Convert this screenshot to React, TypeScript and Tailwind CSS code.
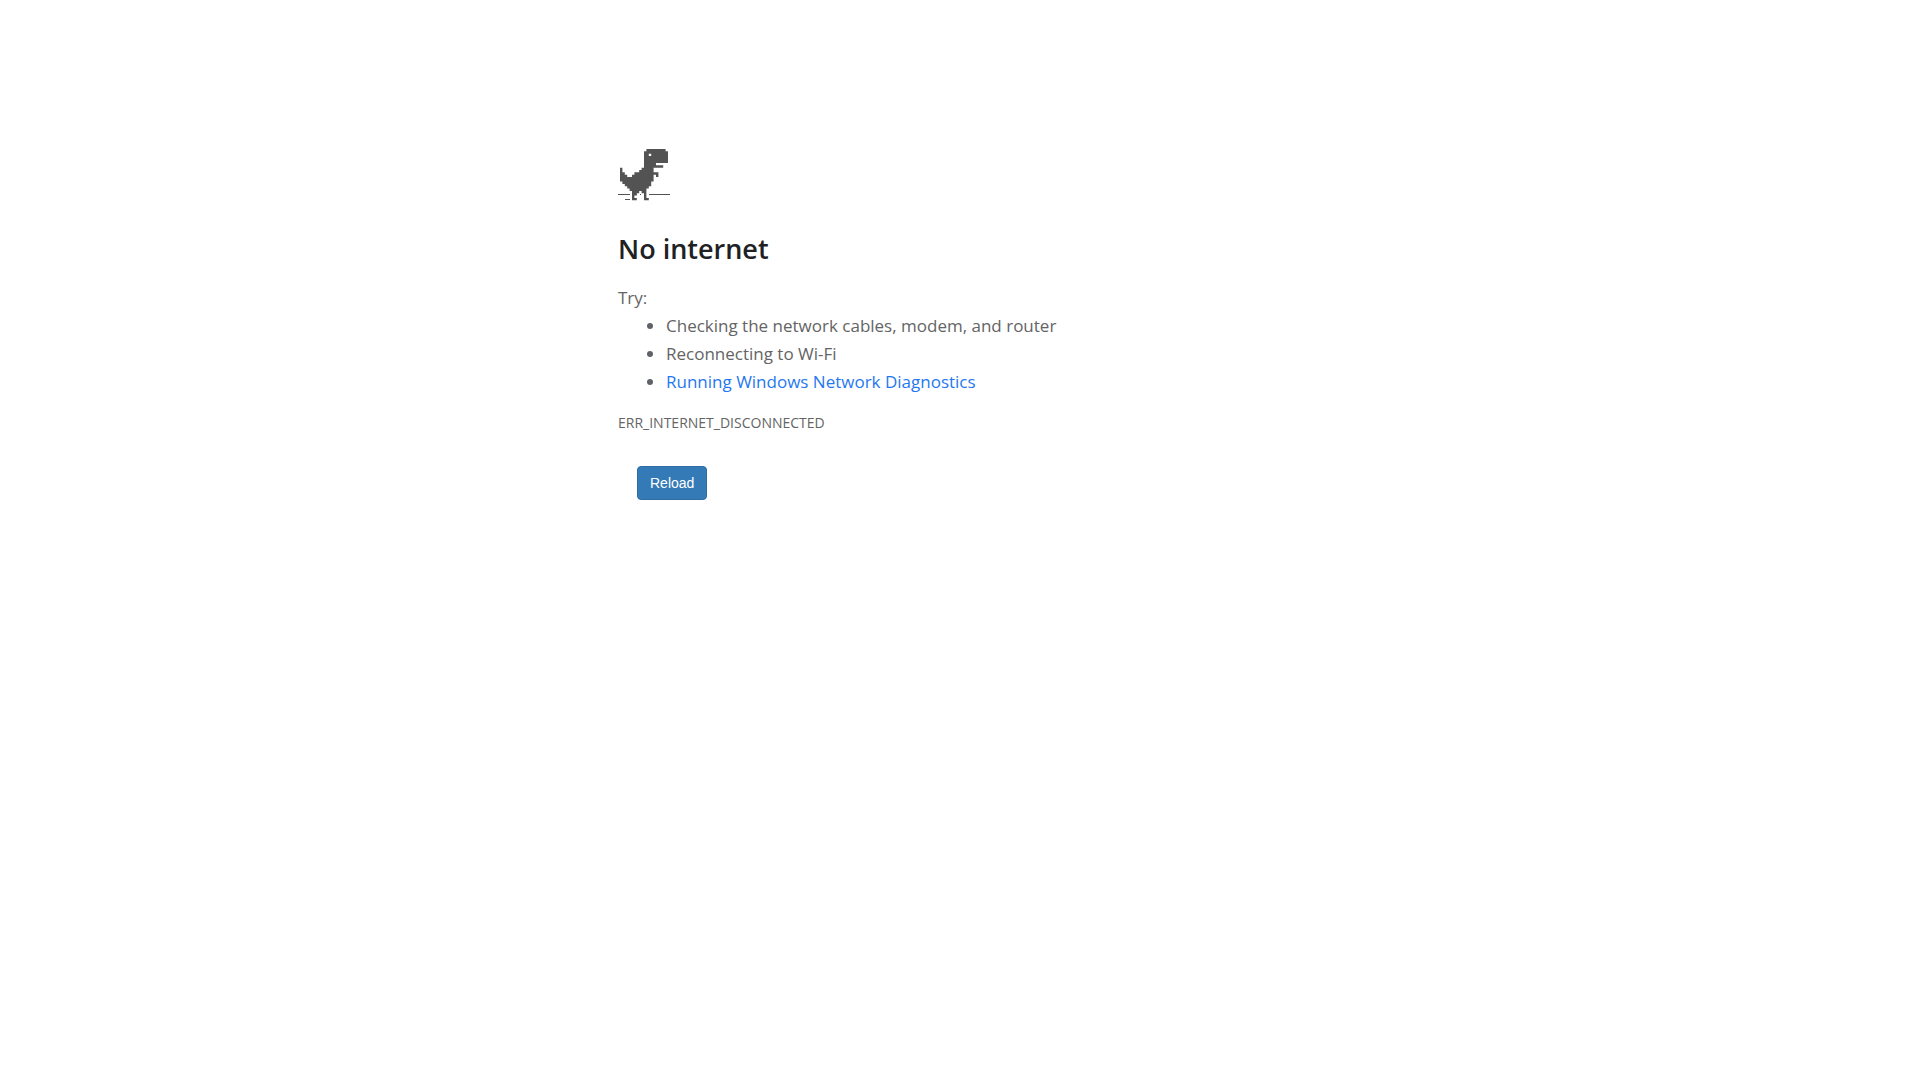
const dinoRows: [number, number, number][] = [
  [0, 11, 8], [1, 10, 10], [2, 10, 2], [2, 13, 7], [3, 10, 10], [4, 10, 10], [5, 10, 10],
  [6, 10, 5], [7, 10, 8], [8, 0, 1], [8, 9, 5], [9, 0, 1], [9, 8, 6], [10, 0, 2], [10, 6, 10],
  [11, 0, 3], [11, 5, 9], [11, 15, 1], [12, 0, 14], [13, 0, 14], [14, 1, 12], [15, 2, 11],
  [16, 3, 9], [17, 4, 7], [18, 5, 3], [18, 9, 2], [19, 5, 2], [19, 10, 1], [20, 5, 1],
  [20, 10, 1], [21, 5, 2], [21, 10, 2],
];

const dinoPath = dinoRows.map(([y, x, w]) => `M${x} ${y}h${w}v1h${-w}z`).join("");

function Dino() {
  return (
    <svg width="54" height="54" viewBox="0 0 54 54" fill="#535353" role="img" aria-label="Dinosaur">
      <path d={dinoPath} transform="translate(2 1) scale(2.4 2.33)" />
      <path d="M0 46h12v1H0zM31 46h21v1H31zM7 51h5v1H7zM22 46h1v1h-1zM17 46h2v1h-2z" />
    </svg>
  );
}

export default function App() {
  return (
    <main className="min-h-screen bg-white px-6 pt-37 font-['Open_Sans',sans-serif] text-[#646464]">
      <div className="mx-auto max-w-[684px]">
        <Dino />
        <h1 className="mt-7 text-[27px] leading-[38px] font-semibold text-[#202124]">No internet</h1>
        <p className="mt-4 text-[17px] leading-7">Try:</p>
        <ul className="list-disc pl-12 text-[17px] leading-7 marker:text-[#5f6368]">
          <li>Checking the network cables, modem, and router</li>
          <li>Reconnecting to Wi-Fi</li>
          <li>
            <a href="#diagnostics" className="text-[#1f78f0]">Running Windows Network Diagnostics</a>
          </li>
        </ul>
        <p className="mt-4 text-sm leading-[22px]">ERR_INTERNET_DISCONNECTED</p>
        <button
          type="button"
          className="mt-8 ml-[19px] rounded border border-[#2e6da4] bg-[#337ab7] px-3 py-1.5 font-['Liberation_Sans',sans-serif] text-sm leading-5 text-white"
        >
          Reload
        </button>
      </div>
    </main>
  );
}
